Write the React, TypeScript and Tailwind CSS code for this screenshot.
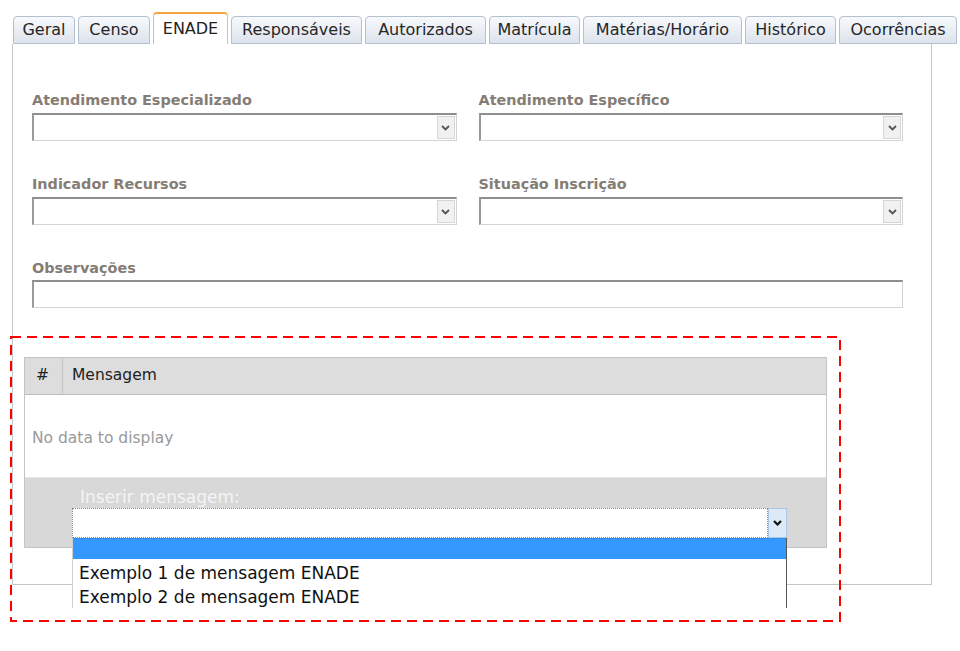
import React from "react";

const tabs: { label: string; w: number; active?: boolean }[] = [
  { label: "Geral", w: 62 },
  { label: "Censo", w: 72 },
  { label: "ENADE", w: 75, active: true },
  { label: "Responsáveis", w: 131 },
  { label: "Autorizados", w: 121 },
  { label: "Matrícula", w: 91 },
  { label: "Matérias/Horário", w: 159 },
  { label: "Histórico", w: 91 },
  { label: "Ocorrências", w: 118 },
];

function Chevron({ bold }: { bold?: boolean }) {
  return (
    <svg width="9" height="6" viewBox="0 0 9 6">
      <path
        d="M1 1 L4.5 4.5 L8 1"
        fill="none"
        stroke={bold ? "#111" : "#555"}
        strokeWidth={bold ? 2.2 : 1.8}
      />
    </svg>
  );
}

function SelectBox({ arrow = true }: { arrow?: boolean }) {
  return (
    <div className="flex h-[28px] w-full border-t-2 border-l-2 border-t-[#8e8e8e] border-l-[#9a9a9a] border-b border-r border-b-[#d4d4d4] border-r-[#d4d4d4] bg-white">
      <div className="flex-1" />
      {arrow && (
        <div className="my-[1px] mr-[1px] flex w-[18px] items-center justify-center border border-[#d6d6d6] bg-[#f1f1f1]">
          <Chevron />
        </div>
      )}
    </div>
  );
}

function Field({ label, arrow = true }: { label: string; arrow?: boolean }) {
  return (
    <div className="flex flex-col">
      <div className="mb-[4px] text-[14.4px] font-bold leading-[18px] text-[#857d75]">{label}</div>
      <SelectBox arrow={arrow} />
    </div>
  );
}

export default function App() {
  return (
    <div
      className="relative h-[651px] w-[960px] overflow-hidden bg-white"
      style={{ fontFamily: '"DejaVu Sans", Verdana, sans-serif' }}
    >
      {/* Tabs */}
      <div className="flex items-end gap-[3px] pl-[13px] pt-[12px]">
        {tabs.map((t) =>
          t.active ? (
            <div
              key={t.label}
              style={{ width: t.w }}
              className="flex h-[32px] items-center justify-center rounded-t-[4px] border-x border-t-2 border-x-[#b9c3cf] border-t-[#f5a53a] bg-white text-[16px] text-[#222]"
            >
              {t.label}
            </div>
          ) : (
            <div
              key={t.label}
              style={{ width: t.w }}
              className="flex h-[28px] items-center justify-center rounded-t-[4px] border border-[#b2c0d0] bg-gradient-to-b from-[#f7f9fc] to-[#dde3ec] text-[16px] text-[#262626]"
            >
              {t.label}
            </div>
          )
        )}
      </div>

      {/* Panel */}
      <div className="ml-[12px] h-[541px] w-[920px] border-x border-b border-[#c6c6c6]">
        <div className="px-[19px] pt-[47px]">
          <div className="grid grid-cols-2 gap-x-[22px] gap-y-[34px] pr-[9px]">
            <Field label="Atendimento Especializado" />
            <Field label="Atendimento Específico" />
            <Field label="Indicador Recursos" />
            <Field label="Situação Inscrição" />
          </div>
          <div className="mt-[34px] pr-[9px]">
            <div className="mb-[3px] text-[14.4px] font-bold leading-[18px] text-[#857d75]">Observações</div>
            <SelectBox arrow={false} />
          </div>
        </div>

        {/* Grid */}
        <div className="ml-[11px] mt-[49px] w-[803px] border border-[#c4c4c4]">
          <div className="flex h-[37px] border-b border-[#bcbcbc] bg-[#dddddd] text-[15.5px] text-[#222]">
            <div className="flex w-[38px] items-center pl-[11px] border-r border-[#c4c4c4]">#</div>
            <div className="flex items-center pl-[9px]">Mensagem</div>
          </div>
          <div className="flex h-[82px] items-center pl-[7px] pt-[5px] text-[15.5px] text-[#9a9a9a]">No data to display</div>
          <div className="h-[70px] border-t border-[#e6e6e6] bg-[#d8d8d8] pl-[47px] pt-[8px]">
            <div className="pl-[8px] text-[17px] leading-[22px] text-[#f4f4f4]">Inserir mensagem:</div>
            <div className="flex h-[30px] w-[715px]">
              <div className="flex-1 border border-dotted border-[#8a8a8a] bg-white" />
              <div className="flex w-[19px] items-center justify-center border border-[#a9c6e4] bg-[#dde9f7]">
                <Chevron bold />
              </div>
            </div>
          </div>
        </div>
      </div>

      {/* Dropdown list (open) */}
      <div className="absolute left-[72px] top-[538px] h-[70px] w-[715px] border-l border-r border-l-[#cfcfcf] border-r-[#555] bg-white text-[17px] text-[#111]">
        <div className="h-[21px] border-t border-[#2f8fee] bg-[#3399ff]" />
        <div className="pl-[6px] pt-[2px] leading-[24px]">Exemplo 1 de mensagem ENADE</div>
        <div className="pl-[6px] leading-[24px]">Exemplo 2 de mensagem ENADE</div>
      </div>

      {/* Red dashed annotation */}
      <svg className="pointer-events-none absolute left-[9px] top-[335px]" width="833" height="288">
        <rect x="2" y="2" width="829" height="284" fill="none" stroke="#ff0000" strokeWidth="2" strokeDasharray="10 6" />
      </svg>
    </div>
  );
}
